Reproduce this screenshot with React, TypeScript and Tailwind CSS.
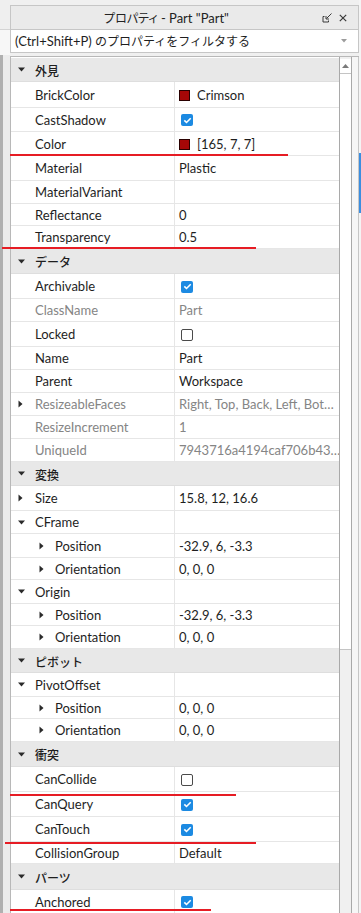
import type { ReactNode } from 'react'

type Val =
  | { kind: 'text'; text: string }
  | { kind: 'check'; on: boolean }
  | { kind: 'swatch'; text: string }

type Row =
  | { type: 'header'; label: string; h: string }
  | {
      type: 'prop'
      label: string
      h: string
      value?: Val
      indent?: boolean
      arrow?: 'down' | 'right'
      dim?: boolean
    }

const rows: Row[] = [
  { type: 'header', label: '外見', h: 'h-[24px]' },
  { type: 'prop', label: 'BrickColor', h: 'h-[26px]', value: { kind: 'swatch', text: 'Crimson' } },
  { type: 'prop', label: 'CastShadow', h: 'h-[24px]', value: { kind: 'check', on: true } },
  { type: 'prop', label: 'Color', h: 'h-[24px]', value: { kind: 'swatch', text: '[165, 7, 7]' } },
  { type: 'prop', label: 'Material', h: 'h-[25px]', value: { kind: 'text', text: 'Plastic' } },
  { type: 'prop', label: 'MaterialVariant', h: 'h-[23px]' },
  { type: 'prop', label: 'Reflectance', h: 'h-[22px]', value: { kind: 'text', text: '0' } },
  { type: 'prop', label: 'Transparency', h: 'h-[23px]', value: { kind: 'text', text: '0.5' } },
  { type: 'header', label: 'データ', h: 'h-[25px]' },
  { type: 'prop', label: 'Archivable', h: 'h-[25px]', value: { kind: 'check', on: true } },
  { type: 'prop', label: 'ClassName', h: 'h-[23px]', dim: true, value: { kind: 'text', text: 'Part' } },
  { type: 'prop', label: 'Locked', h: 'h-[25px]', value: { kind: 'check', on: false } },
  { type: 'prop', label: 'Name', h: 'h-[23px]', value: { kind: 'text', text: 'Part' } },
  { type: 'prop', label: 'Parent', h: 'h-[23px]', value: { kind: 'text', text: 'Workspace' } },
  {
    type: 'prop',
    label: 'ResizeableFaces',
    h: 'h-[23px]',
    dim: true,
    arrow: 'right',
    value: { kind: 'text', text: 'Right, Top, Back, Left, Bot…' },
  },
  { type: 'prop', label: 'ResizeIncrement', h: 'h-[23px]', dim: true, value: { kind: 'text', text: '1' } },
  { type: 'prop', label: 'UniqueId', h: 'h-[23px]', dim: true, value: { kind: 'text', text: '7943716a4194caf706b43…' } },
  { type: 'header', label: '変換', h: 'h-[24px]' },
  { type: 'prop', label: 'Size', h: 'h-[25px]', arrow: 'right', value: { kind: 'text', text: '15.8, 12, 16.6' } },
  { type: 'prop', label: 'CFrame', h: 'h-[23px]', arrow: 'down' },
  { type: 'prop', label: 'Position', h: 'h-[24px]', indent: true, arrow: 'right', value: { kind: 'text', text: '-32.9, 6, -3.3' } },
  { type: 'prop', label: 'Orientation', h: 'h-[22px]', indent: true, arrow: 'right', value: { kind: 'text', text: '0, 0, 0' } },
  { type: 'prop', label: 'Origin', h: 'h-[24px]', arrow: 'down' },
  { type: 'prop', label: 'Position', h: 'h-[22px]', indent: true, arrow: 'right', value: { kind: 'text', text: '-32.9, 6, -3.3' } },
  { type: 'prop', label: 'Orientation', h: 'h-[23px]', indent: true, arrow: 'right', value: { kind: 'text', text: '0, 0, 0' } },
  { type: 'header', label: 'ピボット', h: 'h-[24px]' },
  { type: 'prop', label: 'PivotOffset', h: 'h-[24px]', arrow: 'down' },
  { type: 'prop', label: 'Position', h: 'h-[22px]', indent: true, arrow: 'right', value: { kind: 'text', text: '0, 0, 0' } },
  { type: 'prop', label: 'Orientation', h: 'h-[23px]', indent: true, arrow: 'right', value: { kind: 'text', text: '0, 0, 0' } },
  { type: 'header', label: '衝突', h: 'h-[25px]' },
  { type: 'prop', label: 'CanCollide', h: 'h-[25px]', value: { kind: 'check', on: false } },
  { type: 'prop', label: 'CanQuery', h: 'h-[25px]', value: { kind: 'check', on: true } },
  { type: 'prop', label: 'CanTouch', h: 'h-[25px]', value: { kind: 'check', on: true } },
  { type: 'prop', label: 'CollisionGroup', h: 'h-[22px]', value: { kind: 'text', text: 'Default' } },
  { type: 'header', label: 'パーツ', h: 'h-[26px]' },
  { type: 'prop', label: 'Anchored', h: 'h-[24px]', value: { kind: 'check', on: true } },
]

function Tri({ dir }: { dir: 'down' | 'right' }) {
  return dir === 'down' ? (
    <svg width="7" height="5" viewBox="0 0 7 5" className="block">
      <path d="M0 0.5H7L3.5 4.5Z" fill="#2a2a2a" />
    </svg>
  ) : (
    <svg width="5" height="8" viewBox="0 0 5 8" className="block">
      <path d="M0.5 0.5L4.5 4L0.5 7.5Z" fill="#2a2a2a" />
    </svg>
  )
}

function Check({ on }: { on: boolean }) {
  return on ? (
    <span className="flex h-[12px] w-[12px] items-center justify-center rounded-[2px] bg-[#1c8ae2]">
      <svg width="9" height="7" viewBox="0 0 9 7">
        <path d="M1.3 3.4L3.5 5.5L7.7 1.3" fill="none" stroke="#fff" strokeWidth="1.6" />
      </svg>
    </span>
  ) : (
    <span className="block h-[12px] w-[12px] rounded-[2px] border border-[#4a4a4a] bg-white" />
  )
}

function Value({ v, dim }: { v?: Val; dim?: boolean }) {
  if (!v) return null
  if (v.kind === 'check')
    return (
      <span className="ml-[2px]">
        <Check on={v.on} />
      </span>
    )
  if (v.kind === 'swatch')
    return (
      <span className="flex items-center gap-[7px]">
        <span className="block h-[11px] w-[11px] border border-[#2a0000] bg-[#a50707]" />
        <span>{v.text}</span>
      </span>
    )
  return <span className={dim ? 'text-[#858585]' : ''}>{v.text}</span>
}

function GridRow({ row }: { row: Row }) {
  if (row.type === 'header') {
    return (
      <div className={`flex items-center border-b border-[#dedede] bg-[#e8e8e8] ${row.h}`}>
        <div className="w-[24px] pl-[7px]">
          <Tri dir="down" />
        </div>
        <span className="pt-[2px] font-['Noto_Sans_CJK_JP',sans-serif] text-[12px] font-medium text-[#1e1e1e]">
          {row.label}
        </span>
      </div>
    )
  }
  let arrow: ReactNode = null
  if (row.arrow) arrow = <Tri dir={row.arrow} />
  return (
    <div className={`flex border-b border-[#e6e6e6] bg-white ${row.h}`}>
      <div className="flex w-[163px] shrink-0 items-center">
        {row.indent ? (
          <div className="w-[44px] pl-[28px]">{arrow}</div>
        ) : (
          <div className="w-[24px] pl-[7px]">{arrow}</div>
        )}
        <span className={`pt-[1px] ${row.dim ? 'text-[#858585]' : 'text-[#1e1e1e]'}`}>{row.label}</span>
      </div>
      <div className="flex min-w-0 flex-1 items-center overflow-hidden whitespace-nowrap border-l border-[#e6e6e6] pl-[4px] pt-[1px] text-[#1e1e1e]">
        <Value v={row.value} dim={row.dim} />
      </div>
    </div>
  )
}

function UndockIcon() {
  return (
    <svg width="11" height="10" viewBox="0 0 11 10" className="block">
      <path d="M1 3.5V9H6.5V7.5M1 3.5H2.5" fill="none" stroke="#3a3a3a" strokeWidth="1" />
      <path d="M9.5 0.5L4.5 5.5" fill="none" stroke="#3a3a3a" strokeWidth="1" />
      <path d="M4 3V6H7" fill="none" stroke="#3a3a3a" strokeWidth="1" />
    </svg>
  )
}

function CloseIcon() {
  return (
    <svg width="8" height="8" viewBox="0 0 8 8" className="block">
      <path d="M0.8 0.8L7.2 7.2M7.2 0.8L0.8 7.2" stroke="#3a3a3a" strokeWidth="1.2" />
    </svg>
  )
}

export default function App() {
  return (
    <div className="relative flex h-[913px] w-[361px] overflow-hidden bg-[#f0f0f0] font-['Lato','Noto_Sans_CJK_JP',sans-serif] text-[13px] leading-none">
      {/* left neighbour panel edge */}
      <div className="flex w-[10px] shrink-0 flex-col">
        <div className="h-[30px] border-b border-[#d4d4d4] bg-[#efefef]" />
        <div className="h-[25px] bg-[#f7f7f7]" />
        <div className="flex flex-1">
          <div className="w-[3px] bg-[#b0b0b0]" />
          <div className="flex-1 bg-[#ececec]" />
        </div>
      </div>

      {/* properties panel */}
      <div className="flex w-[349px] shrink-0 flex-col pt-[5px]">
        <div className="flex h-[25px] shrink-0 items-center border border-[#c6c6c6] bg-[#eaeaea]">
          <div className="flex flex-1 justify-center text-[#222]">
            <span className="pt-[1px] font-['Noto_Sans_CJK_JP',sans-serif] text-[12px] [font-feature-settings:'palt']">
              プロパティ
            </span>
            <span className="whitespace-pre pt-[1px]"> - Part "Part"</span>
          </div>
          <div className="flex w-[36px] items-center gap-[6px]">
            <UndockIcon />
            <CloseIcon />
          </div>
        </div>
        <div className="flex h-[23px] shrink-0 items-center border-x border-b border-[#c6c6c6] bg-white pl-[4px] pr-[11px] text-[#1e1e1e]">
          <span className="whitespace-pre pt-[1px]">(Ctrl+Shift+P) </span>
          <span className="flex-1 font-['Noto_Sans_CJK_JP',sans-serif] text-[12px]">のプロパティをフィルタする</span>
          <svg width="6" height="4" viewBox="0 0 6 4" className="block">
            <path d="M0 0H6L3 3.5Z" fill="#9c9c9c" />
          </svg>
        </div>

        <div className="mt-[3px] flex flex-1 border-t border-[#b8b8b8]">
          {/* grid */}
          <div className="flex w-[329px] shrink-0 flex-col border-l border-[#b8b8b8] bg-white pt-[1px]">
            {rows.map((r, i) => (
              <GridRow key={i} row={r} />
            ))}
          </div>
          {/* scrollbar */}
          <div className="flex w-[13px] shrink-0 flex-col border-x border-[#a9a9a9] bg-[#f0f0f0] pt-[2px]">
            <div className="flex h-[15px] items-center justify-center border-b border-[#c4c4c4] bg-white">
              <svg width="7" height="4" viewBox="0 0 7 4" className="block">
                <path d="M0 4H7L3.5 0Z" fill="#7a7a7a" />
              </svg>
            </div>
            <div className="h-[576px] border-b border-[#c4c4c4] bg-white" />
          </div>
          <div className="flex-1 border-r border-[#c6c6c6] bg-[#f6f6f6]" />
        </div>
      </div>

      {/* right neighbour edge */}
      <div className="flex flex-1 flex-col bg-[#f4f4f4]">
        <div className="mt-[153px] h-[60px] bg-[#3b8ee0]" />
      </div>

      {/* red annotation underlines */}
      <div className="pointer-events-none absolute left-[10px] top-[154px] h-[2px] w-[278px] bg-[#e61c24]" />
      <div className="pointer-events-none absolute left-[2px] top-[247px] h-[2px] w-[254px] bg-[#e61c24]" />
      <div className="pointer-events-none absolute left-[10px] top-[794px] h-[2px] w-[226px] bg-[#e61c24]" />
      <div className="pointer-events-none absolute left-[5px] top-[842px] h-[2px] w-[251px] bg-[#e61c24]" />
      <div className="pointer-events-none absolute left-[10px] top-[909px] h-[2px] w-[201px] bg-[#e61c24]" />
    </div>
  )
}
